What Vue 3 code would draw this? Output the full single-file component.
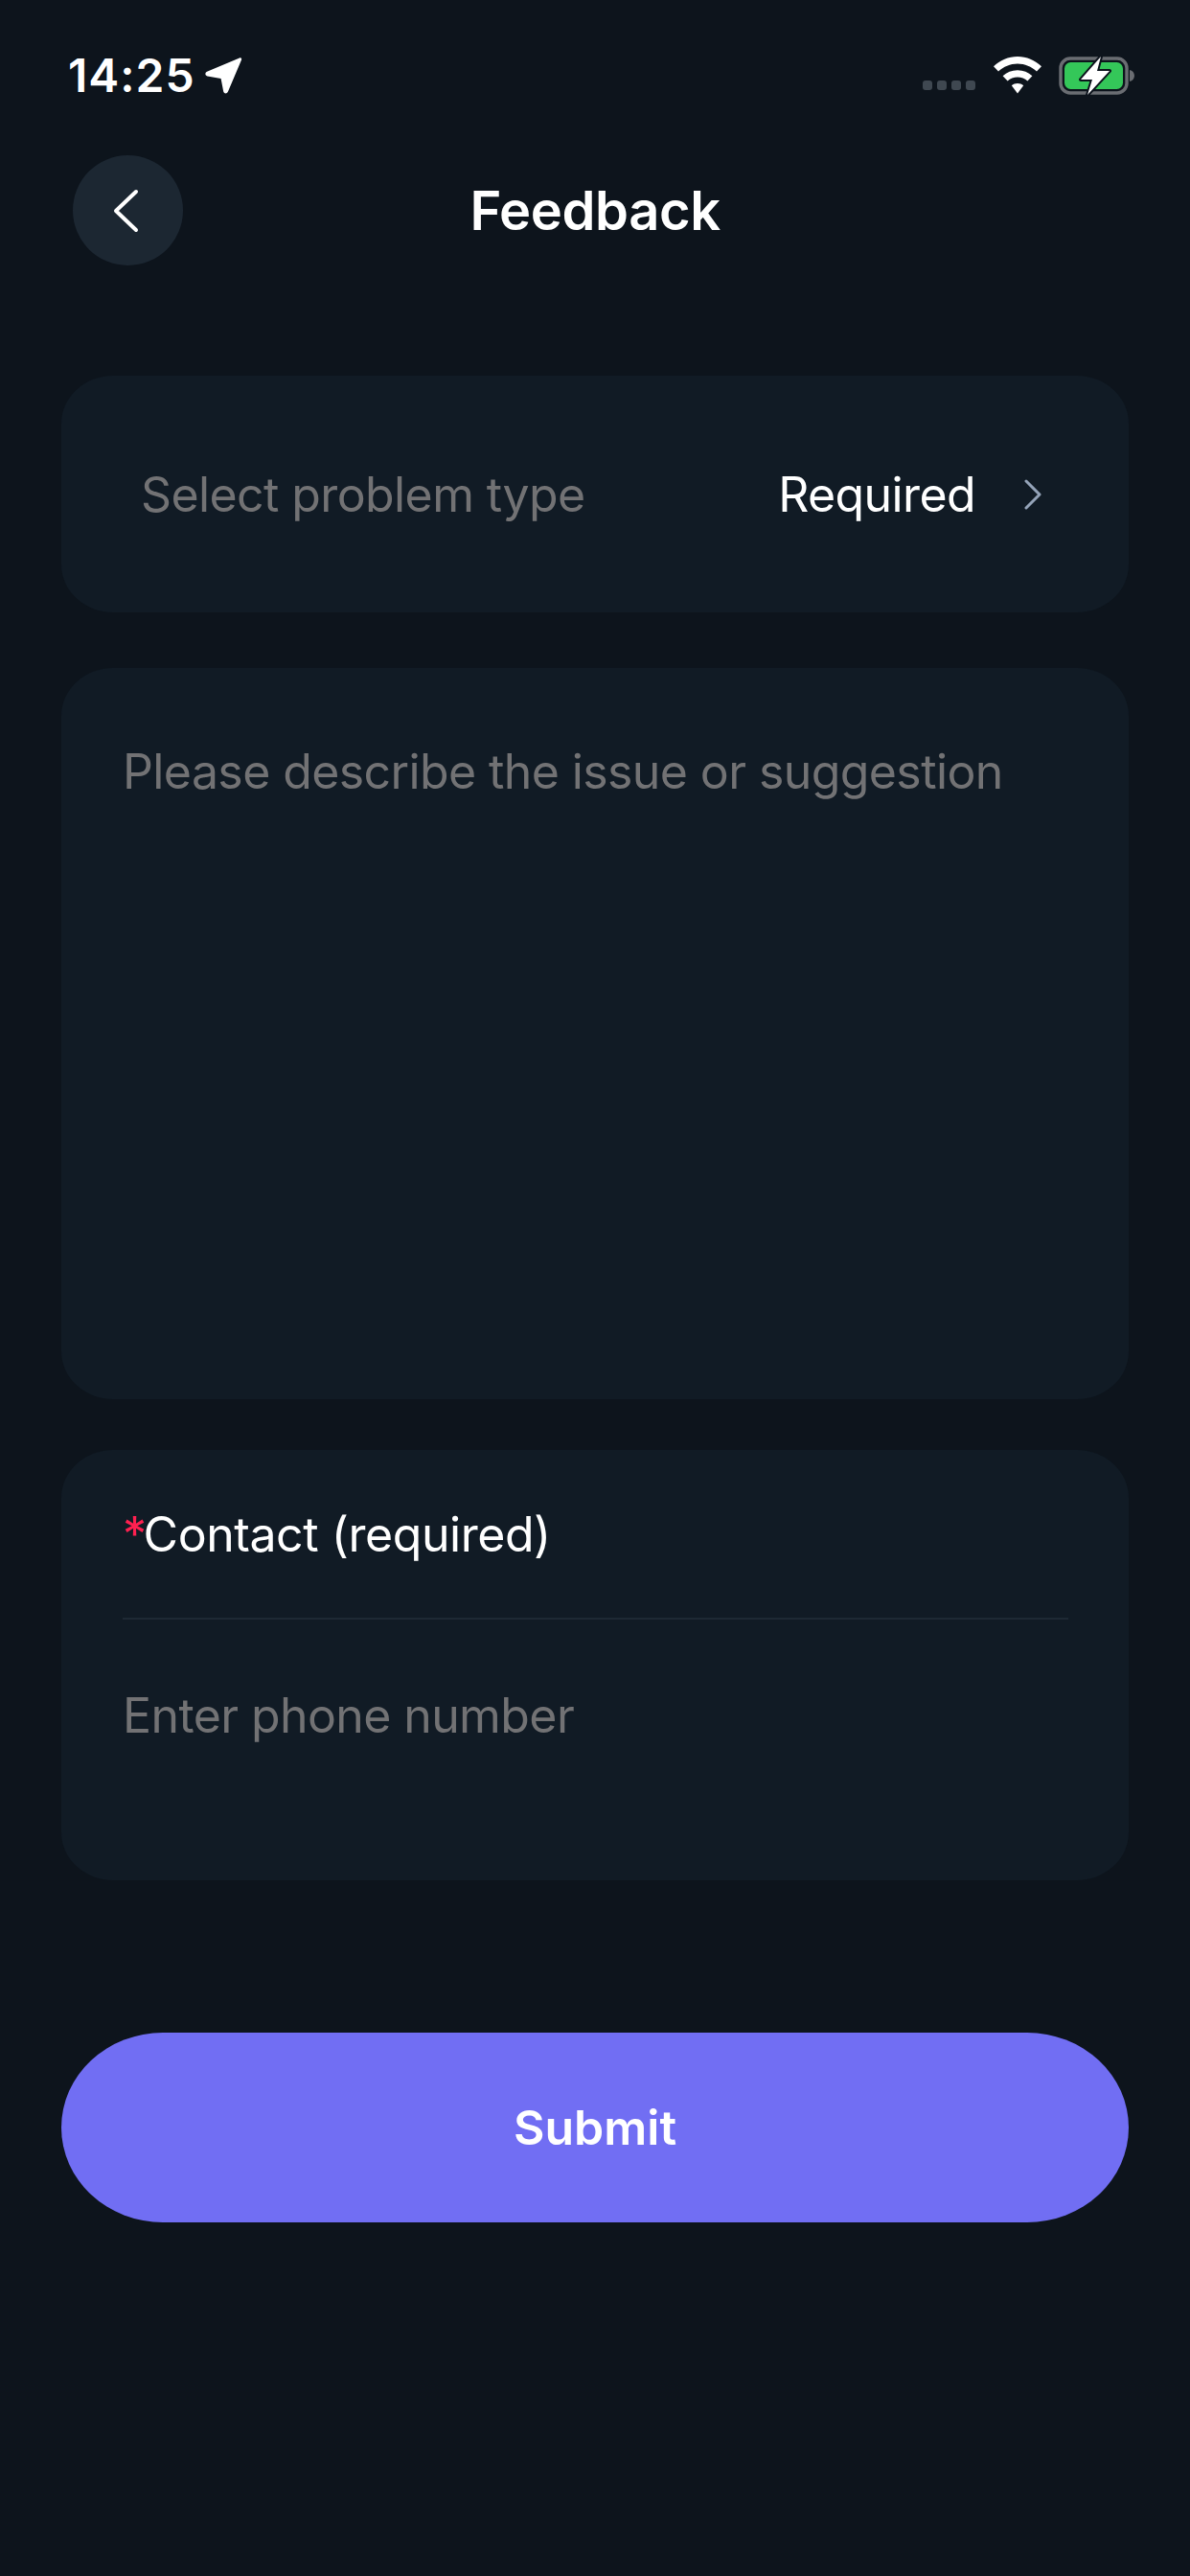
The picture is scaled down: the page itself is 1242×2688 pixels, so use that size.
<script setup>
const title = 'Feedback'
</script>

<template>
  <div class="page">
    <div class="status-bar">
      <div class="status-left">
        <span class="time">14:25</span>
        <svg class="location" width="40" height="40" viewBox="0 0 40 40">
          <path d="M37 1.5 C38.6 .8 39.6 2 39 3.6 L25 36.6 C24 39.2 20.8 39 20.2 36.6 L17.6 23 L3.4 20.4 C.8 19.8 .8 16.8 3 15.8 Z" fill="#fff" />
        </svg>
      </div>
      <div class="status-right">
        <div class="signal">
          <i></i><i></i><i></i><i></i>
        </div>
        <svg class="wifi" width="52" height="40" viewBox="0 0 52 40">
          <path d="M26 0 C35.5 0 44.2 3.8 51 10.2 L46 15.6 C40.6 10.4 33.6 7.4 26 7.4 C18.4 7.4 11.4 10.4 6 15.6 L1 10.2 C7.8 3.8 16.5 0 26 0 Z" fill="#fff" />
          <path d="M26 14.2 C32 14.2 37.2 16.4 41.4 20.2 L36.4 25.6 C33.6 23.2 30 21.6 26 21.6 C22 21.6 18.4 23.2 15.6 25.6 L10.6 20.2 C14.8 16.4 20 14.2 26 14.2 Z" fill="#fff" />
          <path d="M26 28 C28.4 28 30.4 28.8 32.2 30.2 L26 38.6 L19.8 30.2 C21.6 28.8 23.6 28 26 28 Z" fill="#fff" />
        </svg>
        <svg class="battery" width="80" height="42" viewBox="0 0 80 42">
          <rect x="2" y="3" width="69" height="36" rx="10" fill="none" stroke="#6a6d72" stroke-width="3.4" />
          <rect x="6" y="7" width="61" height="28" rx="6.5" fill="#34c759" />
          <path d="M74 15 C77 15.6 79 18 79 21 C79 24 77 26.4 74 27 Z" fill="#6a6d72" />
          <path d="M44 1 L23 25 L35 25 L30 41 L53 16 L40 16 Z" fill="#fff" stroke="#0c131c" stroke-width="4" stroke-linejoin="round" paint-order="stroke" />
        </svg>
      </div>
    </div>

    <div class="header">
      <div class="back-btn">
        <svg width="28" height="46" viewBox="0 0 28 46" fill="none">
          <path d="M25 3 L4 23 L25 43" stroke="#fff" stroke-width="4" stroke-linecap="round" stroke-linejoin="round" />
        </svg>
      </div>
      <div class="title">{{ title }}</div>
    </div>

    <div class="form">
      <div class="card type-card">
        <span class="placeholder">Select problem type</span>
        <div class="type-value">
          <span class="required-text">Required</span>
          <svg width="20" height="32" viewBox="0 0 20 32" fill="none">
            <path d="M3 2 L17 16 L3 30" stroke="#94a3b8" stroke-width="3" stroke-linecap="round" stroke-linejoin="round" />
          </svg>
        </div>
      </div>

      <div class="card desc-card">
        <span class="placeholder">Please describe the issue or suggestion</span>
      </div>

      <div class="card contact-card">
        <div class="contact-label"><span class="star">*</span>Contact (required)</div>
        <div class="contact-input">
          <span class="placeholder">Enter phone number</span>
        </div>
      </div>

      <div class="submit">Submit</div>
    </div>
  </div>
</template>

<style scoped>
.page {
  width: 1242px;
  height: 2688px;
  background: #0d141c;
  font-family: Inter, "Liberation Sans", sans-serif;
  color: #fff;
  overflow: hidden;
}
.status-bar {
  height: 158px;
  padding: 0 57px 0 71px;
  box-sizing: border-box;
  display: flex;
  justify-content: space-between;
  align-items: center;
}
.status-left {
  display: flex;
  align-items: center;
  gap: 9px;
}
.time {
  font-size: 48px;
  font-weight: 600;
  line-height: 58px;
  letter-spacing: 1px;
}
.location {
  display: block;
}
.status-right {
  display: flex;
  align-items: center;
}
.signal {
  display: flex;
  gap: 5px;
  margin: 20px 18px 0 0;
}
.signal i {
  display: block;
  width: 10px;
  height: 10px;
  border-radius: 3px;
  background: #3f4851;
}
.wifi {
  display: block;
  margin-right: 17px;
}
.battery {
  display: block;
}
.header {
  height: 115px;
  margin-top: 4px;
  padding-left: 76px;
  display: flex;
  align-items: center;
  position: relative;
}
.back-btn {
  width: 115px;
  height: 115px;
  border-radius: 50%;
  background: #1c2732;
  display: flex;
  align-items: center;
  justify-content: center;
  padding-right: 6px;
  box-sizing: border-box;
}
.title {
  position: absolute;
  left: 0;
  right: 0;
  text-align: center;
  font-size: 56px;
  font-weight: 600;
  letter-spacing: -0.4px;
}
.form {
  margin-top: 115px;
  padding: 0 64px;
  display: flex;
  flex-direction: column;
}
.card {
  background: #111b25;
  border-radius: 54px / 50px;
  box-sizing: border-box;
}
.placeholder {
  font-size: 50px;
  color: #727274;
  letter-spacing: -0.6px;
}
.type-card {
  height: 247px;
  padding: 0 90px 0 83px;
  display: flex;
  align-items: center;
  justify-content: space-between;
}
.type-value {
  display: flex;
  align-items: center;
  gap: 50px;
}
.required-text {
  font-size: 50px;
  letter-spacing: -0.6px;
}
.desc-card {
  height: 763px;
  margin-top: 58px;
  padding: 78px 64px 0;
}
.contact-card {
  height: 449px;
  margin-top: 53px;
  padding: 0 63px 0 64px;
}
.contact-label {
  height: 177px;
  display: flex;
  align-items: center;
  font-size: 50px;
  letter-spacing: -0.45px;
  border-bottom: 2px solid #1e2934;
  box-sizing: border-box;
}
.star {
  color: #ff2050;
  margin-right: -3px;
}
.contact-input {
  padding-top: 70px;
}
.submit {
  margin-top: 159px;
  height: 198px;
  border-radius: 106px / 99px;
  background: #716ef3;
  display: flex;
  align-items: center;
  justify-content: center;
  font-size: 50px;
  font-weight: 600;
}
</style>
